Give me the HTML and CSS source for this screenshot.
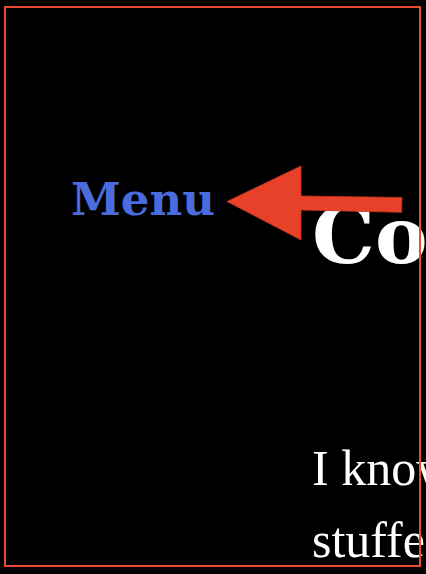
FILE: index.html
```html
<!DOCTYPE html>
<html lang="en">
<head>
<meta charset="utf-8">
<title>Menu</title>
<link rel="stylesheet" href="styles.css">
</head>
<body>
<div class="page">
  <nav class="sidebar">
    <a class="menu-link" href="#">Menu</a>
  </nav>
  <main class="main">
    <h1 class="title">Content</h1>
    <p class="lead">I know it's stuffed in here, but bear with me.</p>
  </main>
</div>
<svg class="arrow" width="426" height="574" viewBox="0 0 426 574" aria-hidden="true">
  <polygon points="227,201.5 301,166 301,196 402,197.5 401.6,212.3 301,210 301,240" fill="#e8412a" stroke="#c8331f" stroke-width="0.8" stroke-linejoin="miter"/>
</svg>
<div class="frame"></div>
</body>
</html>
```

FILE: styles.css
```css
html, body {
  margin: 0;
  padding: 0;
  background: #000;
  overflow: hidden;
  height: 100%;
}

.page {
  display: flex;
  align-items: flex-start;
  width: 900px;
}

.sidebar {
  box-sizing: border-box;
  width: 312px;
  flex: 0 0 312px;
  padding: 173px 0 0 71px;
}

.menu-link {
  font-family: "DejaVu Serif", serif;
  font-weight: bold;
  font-size: 45px;
  line-height: normal;
  color: #4a6cde;
  text-decoration: none;
}

.main {
  width: 240px;
  padding-top: 189px;
  color: #fff;
  font-family: "Liberation Serif", "Times New Roman", serif;
}

.title {
  margin: 0;
  font-family: "DejaVu Serif", serif;
  font-size: 79px;
  font-weight: bold;
  line-height: normal;
  white-space: nowrap;
}

.lead {
  margin: 150px 0 0;
  font-size: 50px;
  line-height: 72px;
}

.arrow {
  position: absolute;
  left: 0;
  top: 0;
  pointer-events: none;
}

.frame {
  position: fixed;
  left: 4px;
  top: 6px;
  width: 417px;
  height: 561px;
  box-sizing: border-box;
  border: 2px solid #ea4a30;
  pointer-events: none;
}
```
